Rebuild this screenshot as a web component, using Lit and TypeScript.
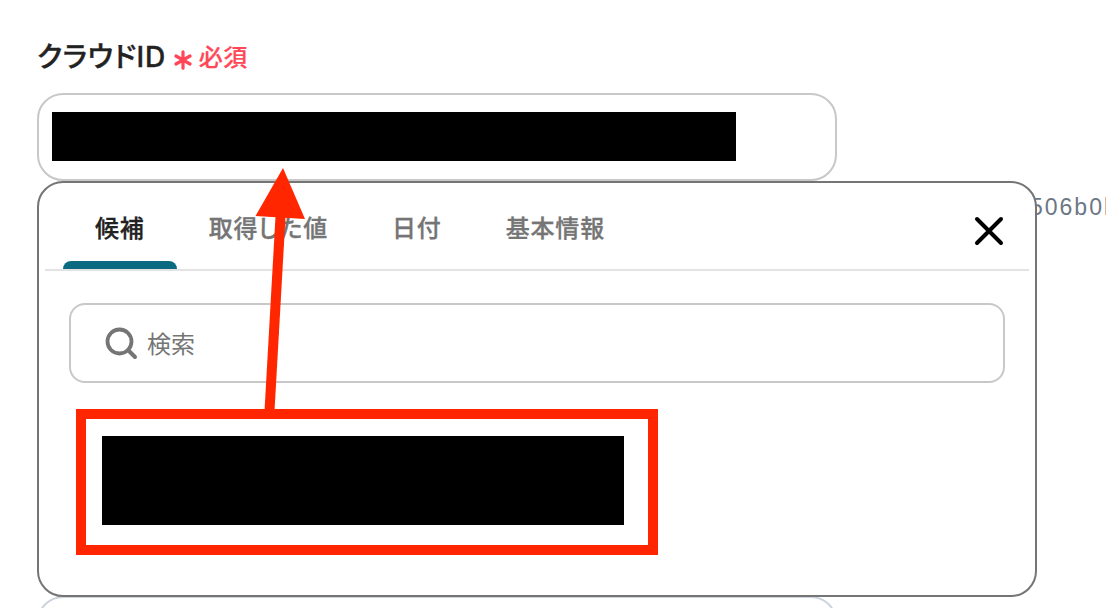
import { LitElement, css, html, svg } from "lit";
import { customElement, property, state } from "lit/decorators.js";
import { classMap } from "lit/directives/class-map.js";

const tabs = ["候補", "取得した値", "日付", "基本情報"];

/**
 * Label row above a form field, with an optional required mark.
 */
@customElement("field-label")
export class FieldLabel extends LitElement {
  static styles = css`
    :host {
      display: flex;
      align-items: center;
      height: 40px;
    }

    .name {
      padding-top: 3px;
      color: #222;
      font-family: Inter, "Noto Sans CJK JP", sans-serif;
      font-size: 28px;
      font-weight: 500;
      font-feature-settings: "palt";
      letter-spacing: 0.7px;
      line-height: 40px;
      white-space: nowrap;
      -webkit-text-stroke: 0.4px #222;
    }

    .required {
      display: flex;
      align-items: center;
      margin-left: 8px;
      padding-top: 1px;
      color: #ff4757;
      font-size: 24px;
      font-weight: 500;
      letter-spacing: 0.5px;
      white-space: nowrap;
      -webkit-text-stroke: 0.2px currentColor;
    }

    .mark {
      width: 18px;
      height: 20px;
      margin: 9px 7px 0 0;
    }
  `;

  @property() name = "";
  @property({ type: Boolean }) required = false;

  render() {
    return html`
      <span class="name">${this.name}</span>
      ${this.required
        ? html`<span class="required">
            <svg class="mark" viewBox="0 0 18 20">
              <path
                d="M9 1.800V18.200M2 6L16 14M16 6L2 14"
                stroke="currentColor"
                stroke-width="3.2"
                stroke-linecap="round"
              />
            </svg>
            <span>必須</span>
          </span>`
        : null}
    `;
  }
}

/**
 * Tabbed panel that offers values for the field it hangs from.
 */
@customElement("value-picker")
export class ValuePicker extends LitElement {
  static styles = css`
    :host {
      box-sizing: border-box;
      display: flex;
      flex-direction: column;
      width: 1000px;
      height: 416px;
      padding: 0 6px;
      border: 2px solid #757575;
      border-radius: 26px;
      background: #fff;
    }

    * {
      box-sizing: border-box;
    }

    .header {
      display: flex;
      height: 88px;
      flex: none;
      justify-content: space-between;
      border-bottom: 2px solid #e3e3e3;
    }

    .tabs {
      display: flex;
      padding-left: 18px;
    }

    .tab {
      display: flex;
      flex-direction: column;
      justify-content: space-between;
      color: #757575;
      font-size: 24px;
      font-weight: 500;
      letter-spacing: 0.83px;
      line-height: 36px;
      white-space: nowrap;
      -webkit-text-stroke: 0.3px currentColor;
    }

    .tab-text {
      padding: 26px 32px 0;
      font-feature-settings: "palt";
    }

    .tab.active {
      color: #222;
    }

    .tab.active::after {
      height: 8px;
      border-radius: 8px 8px 0 0;
      background: #0a6a82;
      content: "";
    }

    .close {
      width: 32px;
      height: 32px;
      margin: 32px 24px 0 0;
    }

    .search {
      display: flex;
      height: 80px;
      flex: none;
      align-items: center;
      gap: 8px;
      margin: 32px 24px 0;
      padding-left: 33px;
      border: 2px solid #c8c8c8;
      border-radius: 16px;
      color: #757575;
      font-size: 24px;
    }

    .search-icon {
      width: 35px;
      height: 36px;
    }

    .search-text {
      margin-bottom: 2px;
    }

    .candidate {
      width: 582px;
      height: 146px;
      margin: 26px 0 0 31px;
      padding: 17px 16px;
      border: 10px solid #ff2600;
    }

    .masked {
      width: 522px;
      height: 89px;
      background: #000;
    }
  `;

  @state() private active = 0;

  render() {
    return html`
      <div class="header">
        <div class="tabs">
          ${tabs.map(
            (tab, index) => html`
              <div
                class=${classMap({ tab: true, active: index === this.active })}
                @click=${() => (this.active = index)}
              >
                <span class="tab-text">${tab}</span>
              </div>
            `,
          )}
        </div>
        <svg class="close" viewBox="0 0 32 32">
          <path
            d="M4 4L28 28M28 4L4 28"
            stroke="#000"
            stroke-width="4"
            stroke-linecap="round"
          />
        </svg>
      </div>
      <div class="search">
        <svg class="search-icon" viewBox="0 0 35 36" fill="none">
          <circle cx="15.5" cy="16.5" r="12" stroke="#757575" stroke-width="3.8" />
          <path
            d="M24 25L31 32"
            stroke="#757575"
            stroke-width="4"
            stroke-linecap="round"
          />
        </svg>
        <span class="search-text">検索</span>
      </div>
      <div class="candidate"><div class="masked"></div></div>
    `;
  }
}

const arrow = svg`
  <path d="M269.5 411L281 208" stroke="#ff2600" stroke-width="10" />
  <path d="M283 168L305 219L255.500 216Z" fill="#ff2600" />
`;

@customElement("app-root")
export class AppRoot extends LitElement {
  static styles = css`
    :host {
      position: relative;
      box-sizing: border-box;
      display: block;
      width: 1106px;
      height: 608px;
      padding: 35px 0 0 37px;
      overflow: hidden;
      background: #fff;
      font-family: "Noto Sans CJK JP", sans-serif;
    }

    * {
      box-sizing: border-box;
    }

    .field {
      width: 800px;
      height: 88px;
      margin-top: 18px;
      padding: 17px 13px;
      border: 2px solid #c8c8c8;
      border-radius: 26px;
    }

    .value {
      width: 684px;
      height: 49px;
      background: #000;
    }

    .hint {
      height: 50px;
      padding-left: 993px;
      overflow: hidden;
      color: #6b7785;
      font-family: "Liberation Sans", sans-serif;
      font-size: 23px;
      letter-spacing: 2px;
      line-height: 52px;
      white-space: nowrap;
    }

    .next-field {
      width: 800px;
      height: 88px;
      margin-top: 365px;
      border: 2px solid #cdd3dd;
      border-radius: 26px;
    }

    .picker {
      position: absolute;
      top: 181px;
      left: 37px;
    }

    .arrow {
      position: absolute;
      inset: 0;
      width: 1106px;
      height: 608px;
      pointer-events: none;
    }
  `;

  render() {
    return html`
      <field-label name="クラウドID" required></field-label>
      <div class="field"><div class="value"></div></div>
      <div class="hint">506b0b</div>
      <div class="next-field"></div>
      <value-picker class="picker"></value-picker>
      <svg class="arrow" viewBox="0 0 1106 608">${arrow}</svg>
    `;
  }
}
